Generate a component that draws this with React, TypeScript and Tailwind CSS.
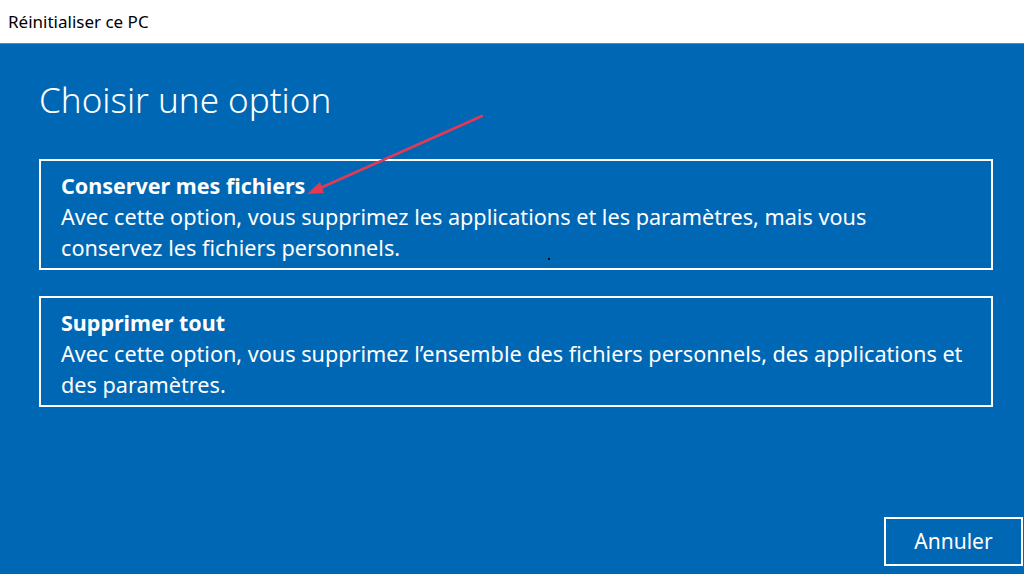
import React from "react";

const font = { fontFamily: '"Noto Sans", "Open Sans", sans-serif' };

function Option({ title, lines }: { title: string; lines: string[] }) {
  return (
    <div className="border-2 border-white pl-[20px] pt-[10px] h-[111px]">
      <div className="text-[21.5px] font-bold leading-[30px] text-white">{title}</div>
      <div className="text-[21.65px] leading-[31px] text-white whitespace-nowrap">
        {lines.map((l, i) => (
          <div key={i}>{l}</div>
        ))}
      </div>
    </div>
  );
}

export default function App() {
  return (
    <div className="w-[1024px] h-[574px] flex flex-col overflow-hidden" style={font}>
      <div className="h-[43px] bg-white flex items-center px-[8px] text-[17px] text-black">
        Réinitialiser ce PC
      </div>
      <div className="relative flex-1 bg-[#0067b4] border-t border-[#3d8fd0] flex flex-col px-[39px]">
        <h1 className="mt-[34px] text-[35px] font-light leading-[44px] text-white">Choisir une option</h1>
        <div className="mt-[37px] mr-[-8px] flex flex-col gap-[26px]">
          <Option
            title="Conserver mes fichiers"
            lines={[
              "Avec cette option, vous supprimez les applications et les paramètres, mais vous",
              "conservez les fichiers personnels.",
            ]}
          />
          <Option
            title="Supprimer tout"
            lines={[
              "Avec cette option, vous supprimez l’ensemble des fichiers personnels, des applications et",
              "des paramètres.",
            ]}
          />
        </div>
        <div className="flex-1" />
        <div className="flex justify-end mr-[-38px] mb-[8px]">
          <button className="w-[139px] h-[49px] border-2 border-white text-white text-[21px]">Annuler</button>
        </div>
        <div className="absolute left-[548px] top-[214px] w-[2px] h-[2px] bg-black" />
        <svg className="absolute left-0 top-0 pointer-events-none" width="1024" height="531" viewBox="0 43 1024 531">
          <line x1="482" y1="115" x2="318" y2="188" stroke="#e23a55" strokeWidth="2.5" strokeLinecap="round" />
          <polygon points="307,193 320,181 324,192" fill="#e23a55" />
        </svg>
      </div>
    </div>
  );
}
